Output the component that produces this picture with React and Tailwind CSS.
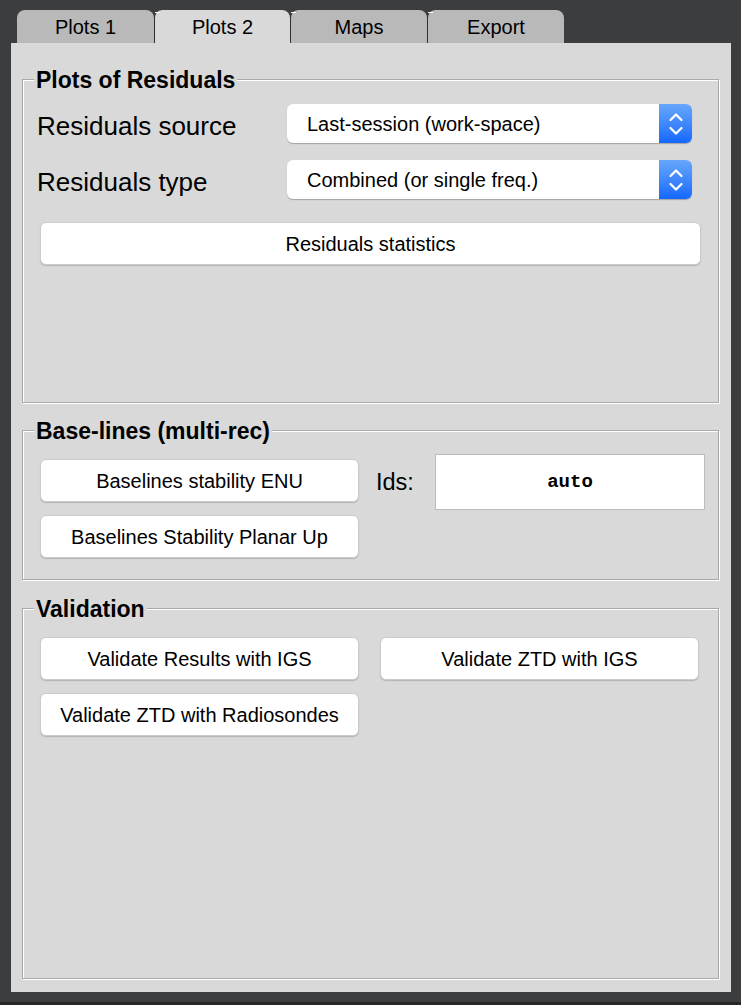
import React from 'react';

const tabs = [
  { label: 'Plots 1', width: 'w-[137px]' },
  { label: 'Plots 2', width: 'w-[136px]', active: true },
  { label: 'Maps', width: 'w-[137px]' },
  { label: 'Export', width: 'w-[137px]' },
];

function Tab({ label, width, active, first }) {
  return (
    <div
      className={`relative flex h-[33px] ${width} items-center justify-center rounded-t-[8px] text-[20px] text-black ${
        active ? 'bg-[#d9d9d9]' : 'bg-[#b9b9b9]'
      } ${first ? '' : 'border-l border-[#2e2e2e]'}`}
    >
      {!first && <span className="absolute left-0 top-[2px] h-[1px] w-[5px] bg-white" />}
      {label}
    </div>
  );
}

function GroupBox({ title, className, children }) {
  return (
    <div
      className={`relative ml-[11px] w-[697px] border border-[#a9a9a9] shadow-[1px_1px_0_#ffffff,inset_1px_1px_0_#ffffff] ${className}`}
    >
      <div className="absolute left-[11px] top-[-14px] bg-[#d9d9d9] px-[2px] text-[23px] font-bold leading-[28px] text-black">
        {title}
      </div>
      {children}
    </div>
  );
}

function Chevrons() {
  return (
    <svg width="16" height="28" viewBox="0 0 16 28" fill="none">
      <polyline points="2.5,10 8,4.5 13.5,10" stroke="#fff" strokeWidth="2.2" strokeLinecap="round" strokeLinejoin="round" />
      <polyline points="2.5,18 8,23.5 13.5,18" stroke="#fff" strokeWidth="2.2" strokeLinecap="round" strokeLinejoin="round" />
    </svg>
  );
}

function Select({ value }) {
  return (
    <div className="flex h-[39px] w-[405px] overflow-hidden rounded-[6px] bg-white shadow-[0_1px_1px_rgba(0,0,0,0.25)]">
      <div className="flex flex-1 items-center pl-[20px] text-[20px] text-black">{value}</div>
      <div className="flex w-[33px] items-center justify-center bg-gradient-to-b from-[#66a6fb] to-[#1467fb]">
        <Chevrons />
      </div>
    </div>
  );
}

function Button({ label, className }) {
  return (
    <button
      className={`flex items-center justify-center rounded-[6px] border border-[#cbcbcb] bg-white text-[20px] text-black shadow-[0_1px_1px_rgba(0,0,0,0.18)] ${className}`}
    >
      {label}
    </button>
  );
}

export default function App() {
  return (
    <div className="flex h-[1005px] w-[741px] flex-col bg-[#3c3d3f] font-['Liberation_Sans',Arial,sans-serif]">
      {/* Tabs */}
      <div className="flex pl-[17px] pt-[10px]">
        {tabs.map((t, i) => (
          <Tab key={t.label} {...t} first={i === 0} />
        ))}
      </div>

      {/* Panel */}
      <div className="ml-[11px] flex h-[949px] w-[720px] flex-col bg-[#d9d9d9] pt-[36px]">
        <GroupBox title="Plots of Residuals" className="h-[324px] pt-[24px]">
          <div className="flex h-[39px] items-center pl-[14px]">
            <span className="w-[250px] pt-[4px] text-[26px] leading-[32px] text-black">Residuals source</span>
            <Select value="Last-session (work-space)" />
          </div>
          <div className="mt-[17px] flex h-[39px] items-center pl-[14px]">
            <span className="w-[250px] pt-[4px] text-[26px] leading-[32px] text-black">Residuals type</span>
            <Select value="Combined (or single freq.)" />
          </div>
          <Button label="Residuals statistics" className="ml-[17px] mt-[23px] h-[43px] w-[661px]" />
        </GroupBox>

        <GroupBox title="Base-lines (multi-rec)" className="mt-[27px] h-[150px] pt-[28px]">
          <div className="flex pl-[17px]">
            <div className="flex flex-col gap-[13px]">
              <Button label="Baselines stability ENU" className="h-[43px] w-[319px]" />
              <Button label="Baselines Stability Planar Up" className="h-[43px] w-[319px]" />
            </div>
            <div className="ml-[17px] mt-[-5px] flex h-[56px] items-center">
              <span className="w-[59px] pt-[2px] text-[23.5px] text-black">Ids:</span>
              <div className="flex h-[56px] w-[270px] items-center justify-center border border-[#bdbdbd] bg-white font-['Liberation_Mono','Courier_New',monospace] text-[19px] font-bold text-black">
                auto
              </div>
            </div>
          </div>
        </GroupBox>

        <GroupBox title="Validation" className="mt-[28px] h-[371px] pt-[28px]">
          <div className="flex gap-[21px] pl-[17px]">
            <Button label="Validate Results with IGS" className="h-[43px] w-[319px]" />
            <Button label="Validate ZTD with IGS" className="h-[43px] w-[319px]" />
          </div>
          <div className="mt-[13px] pl-[17px]">
            <Button label="Validate ZTD with Radiosondes" className="h-[43px] w-[319px]" />
          </div>
        </GroupBox>
      </div>

      <div className="mt-auto h-[3px] w-full bg-[#262626]" />
    </div>
  );
}
